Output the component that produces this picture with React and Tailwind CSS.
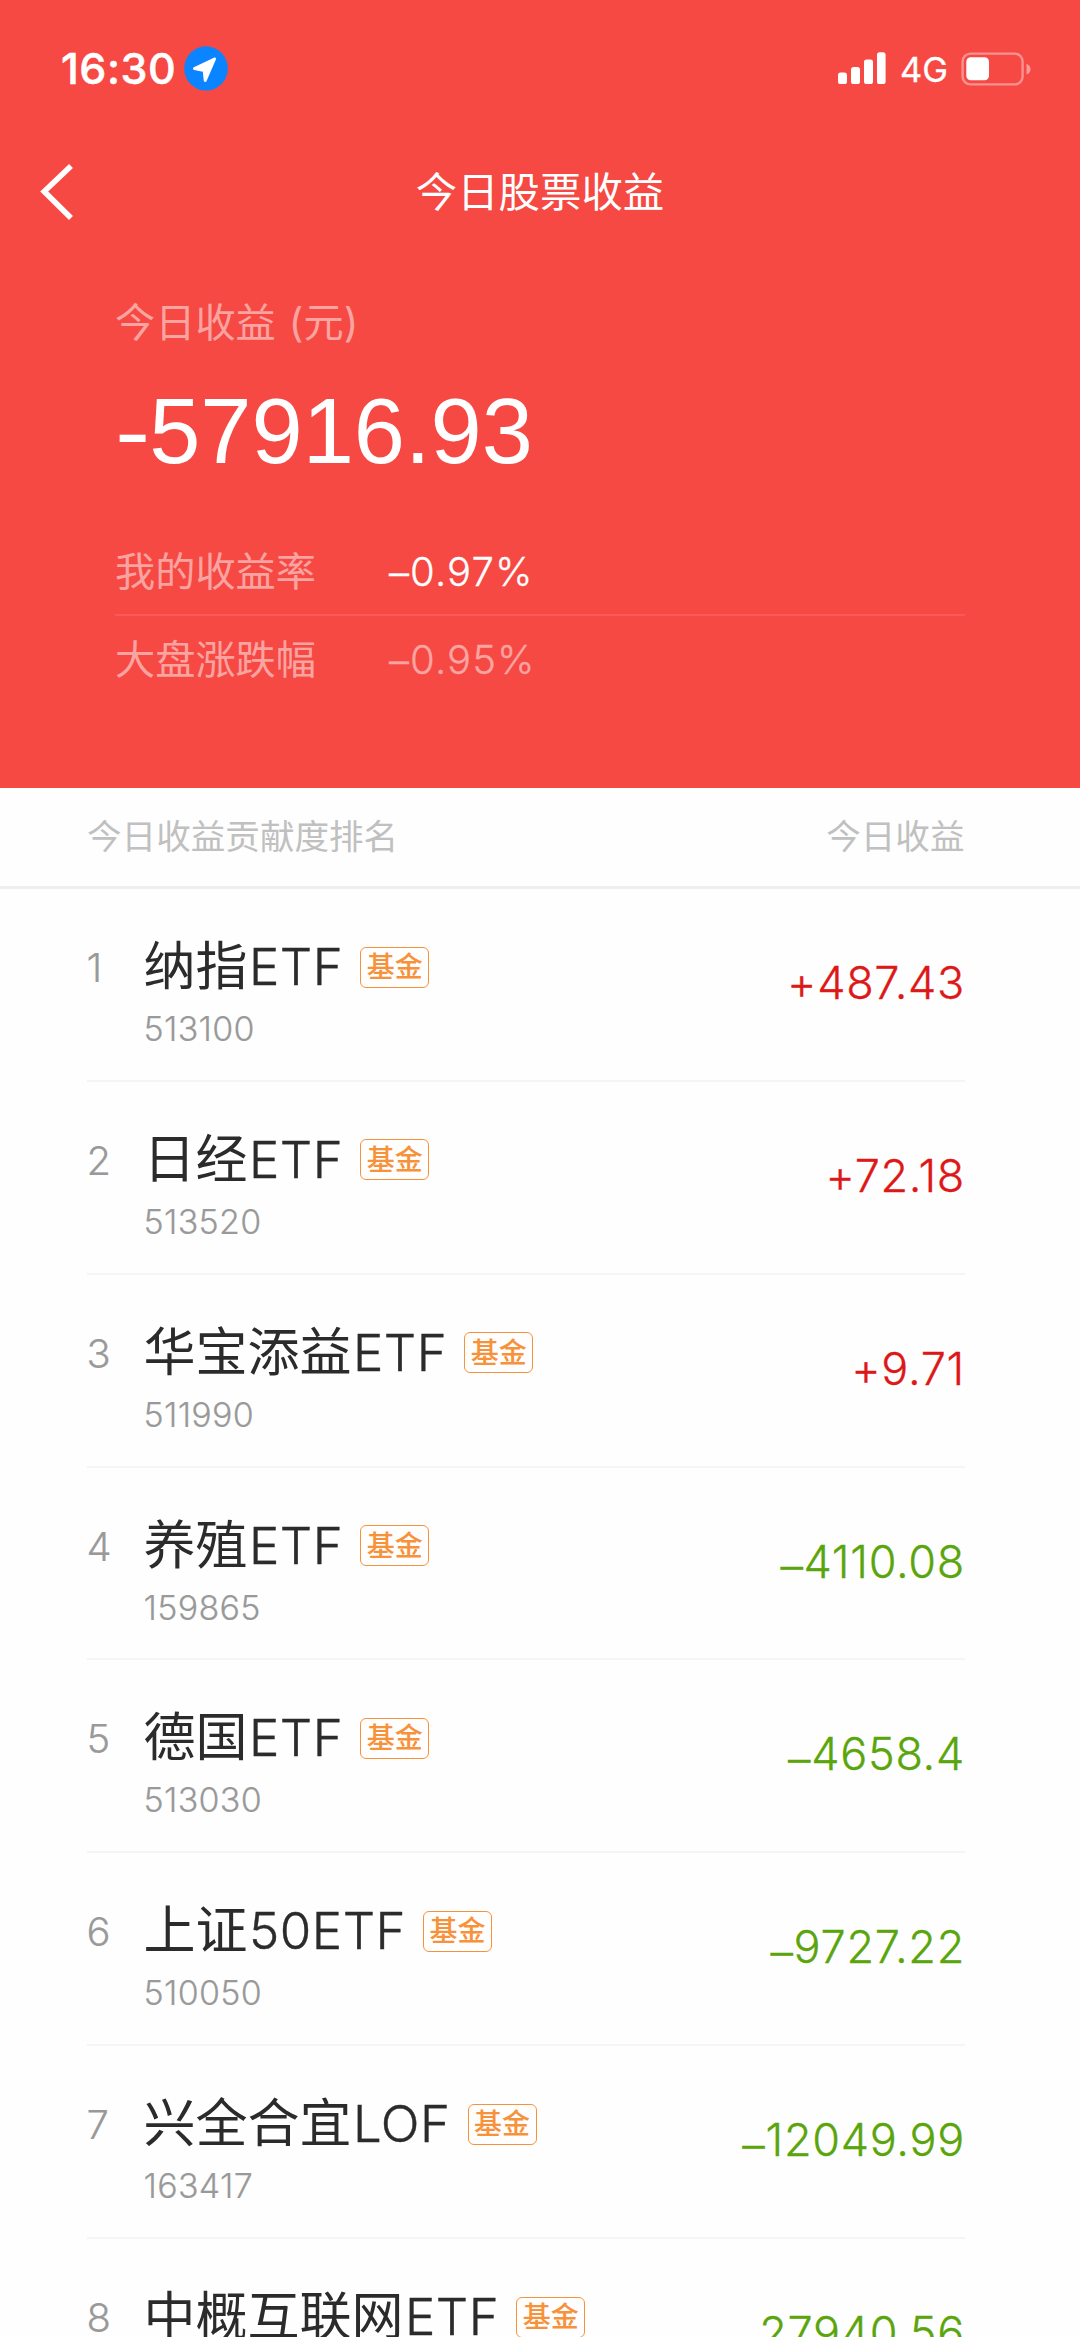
import React from "react";

const holdings = [
  { name: "纳指", suffix: "ETF", code: "513100", value: "+487.43" },
  { name: "日经", suffix: "ETF", code: "513520", value: "+72.18" },
  { name: "华宝添益", suffix: "ETF", code: "511990", value: "+9.71" },
  { name: "养殖", suffix: "ETF", code: "159865", value: "–4110.08" },
  { name: "德国", suffix: "ETF", code: "513030", value: "–4658.4" },
  { name: "上证", suffix: "50ETF", code: "510050", value: "–9727.22" },
  { name: "兴全合宜", suffix: "LOF", code: "163417", value: "–12049.99" },
  { name: "中概互联网", suffix: "ETF", code: "", value: "–27940.56" },
];

function StatusBar() {
  return (
    <div className="flex h-[136px] items-start justify-between pl-[61px] pr-[49px] pt-[46px]">
      <div className="flex h-[45px] items-center">
        <span className="w-[122.5px] whitespace-nowrap text-[43px] font-medium leading-[45px] tracking-[0.5px] [-webkit-text-stroke:0.5px]">16:30</span>
        <svg width="44" height="45" viewBox="0 0 44 45">
          <ellipse cx="22" cy="22.4" rx="21.8" ry="22.2" fill="#0b84ff" />
          <path d="M30.5 13 L10.5 22.6 L20.2 24.6 L21.2 34.4 Z" fill="#fff" stroke="#fff" strokeWidth="3" strokeLinejoin="round" />
        </svg>
      </div>
      <div className="flex h-[45px] items-center">
        <svg width="48" height="32" viewBox="0 0 48 32" fill="#fff" className="mt-[-1px]">
          <rect x="0" y="20.5" width="9" height="11.5" rx="2.6" />
          <rect x="13" y="15" width="9" height="17" rx="2.6" />
          <rect x="26" y="7.5" width="9" height="24.5" rx="2.6" />
          <rect x="39" y="0.3" width="8.6" height="31.7" rx="2.6" />
        </svg>
        <span className="ml-[14px] mt-[2px] w-[61px] text-[34.5px] leading-[45px] [-webkit-text-stroke:0.3px]">4G</span>
        <svg width="70" height="34" viewBox="0 0 70 34">
          <rect x="1.6" y="1.6" width="60" height="30.8" rx="8" fill="none" stroke="#fff" strokeOpacity="0.4" strokeWidth="2.4" />
          <rect x="5.3" y="5.3" width="22.7" height="23" rx="4.5" fill="#fff" />
          <path d="M65.5 11.8 q4 1.6 4 5.4 t-4 5.4 Z" fill="#fff" fillOpacity="0.45" />
        </svg>
      </div>
    </div>
  );
}

function TitleBar() {
  return (
    <div className="grid h-[112px] grid-cols-[200px_1fr_200px] items-center">
      <svg width="40" height="60" viewBox="0 0 40 60" fill="none" stroke="#fff" strokeWidth="5.6" className="ml-[38px]">
        <path d="M33 4 L6.2 29.5 L33 56" />
      </svg>
      <h1 className="text-center text-[41.4px] font-normal leading-[60px]">今日股票收益</h1>
    </div>
  );
}

/* Number whose leading dash sits slightly below the middle of the digits. */
function Signed({ value, drop }) {
  if (value[0] !== "–") return value;
  return (
    <>
      <span className={drop}>–</span>
      {value.slice(1)}
    </>
  );
}

function Rate({ label, value, dim }) {
  return (
    <div className="flex items-center">
      <span className="w-[274px] text-[40.2px] font-normal text-white/50">{label}</span>
      <span className={dim ? "text-[40px] font-light tracking-[1.1px] text-[#fba4a1] [-webkit-text-stroke:0.3px]" : "text-[40px] font-light tracking-[1.1px] text-white [-webkit-text-stroke:0.3px]"}>
        <Signed value={value} drop="relative top-[1px]" />
      </span>
    </div>
  );
}

function Summary() {
  return (
    <section className="flex-1 pl-[115px] pr-[115px]">
      <div className="mt-[46px] text-[40.2px] font-normal leading-[58px] text-white/50">
        今日收益<span className="ml-[13px]">(</span>元<span>)</span>
      </div>
      <div className="mt-[24px] h-[110px] font-['Liberation_Sans',sans-serif] text-[92px] leading-[110px]">
        <span className="mr-[3.5px] inline-block origin-left scale-x-[1.15]">-</span>57916.93
      </div>
      <div className="mt-[57px] border-b-2 border-white/10 pb-[13px] leading-[58px]">
        <Rate label="我的收益率" value="–0.97%" />
      </div>
      <div className="pt-[14.5px] leading-[58px]">
        <Rate label="大盘涨跌幅" value="–0.95%" dim />
      </div>
    </section>
  );
}

function Holding({ rank, name, suffix, code, value }) {
  return (
    <li className="ml-[86.5px] mr-[115px] flex h-[192.86px] shrink-0 border-b-2 border-[#f5f5f5]">
      <span className="w-[57px] pt-[49px] text-[40px] font-light leading-[60px] text-[#999] [-webkit-text-stroke:0.2px]">{rank}</span>
      <div className="flex-1 pt-[48px]">
        <div className="flex h-[60px] items-center leading-[60px]">
          <span className="whitespace-nowrap text-[52px] font-normal text-[#2b2b2b]">
            {name}
            <span className="ml-[1.5px] text-[51px] font-light tracking-[0.5px] [-webkit-text-stroke:0.4px]">{suffix}</span>
          </span>
          <span className="ml-[17px] flex h-[41px] w-[69px] items-center justify-center rounded-[6px] border-[1.5px] border-[#f7923a] text-[28px] font-medium leading-[38px] text-[#f7923a]">
            基金
          </span>
        </div>
        {code && <div className="mt-[10px] text-[34px] font-light leading-[44px] tracking-[0.3px] text-[#999] [-webkit-text-stroke:0.2px]">{code}</div>}
      </div>
      <span className={value[0] === "+" ? "pt-[64px] text-[45px] font-light leading-[60px] tracking-[0.7px] text-[#dd1818] [-webkit-text-stroke:0.3px]" : "pt-[64px] text-[45px] font-light leading-[60px] tracking-[0.7px] text-[#5aa50c] [-webkit-text-stroke:0.3px]"}>
        <Signed value={value} drop="relative top-[4.5px]" />
      </span>
    </li>
  );
}

export default function App() {
  return (
    <main className="flex h-[2337px] w-[1080px] flex-col overflow-hidden bg-[#fefefe] font-['Inter','Noto_Sans_CJK_SC',sans-serif]">
      <header className="flex h-[788px] shrink-0 flex-col bg-[#f64944] text-white">
        <StatusBar />
        <TitleBar />
        <Summary />
      </header>
      <div className="flex h-[101px] shrink-0 items-center justify-between border-b-[3px] border-[#efefef] pl-[87px] pr-[115.5px] text-[34.6px] font-normal text-[#c0c0c0]">
        <span>今日收益贡献度排名</span>
        <span>今日收益</span>
      </div>
      <ul className="flex flex-col">
        {holdings.map((item, i) => (
          <Holding key={item.name} rank={i + 1} {...item} />
        ))}
      </ul>
    </main>
  );
}
